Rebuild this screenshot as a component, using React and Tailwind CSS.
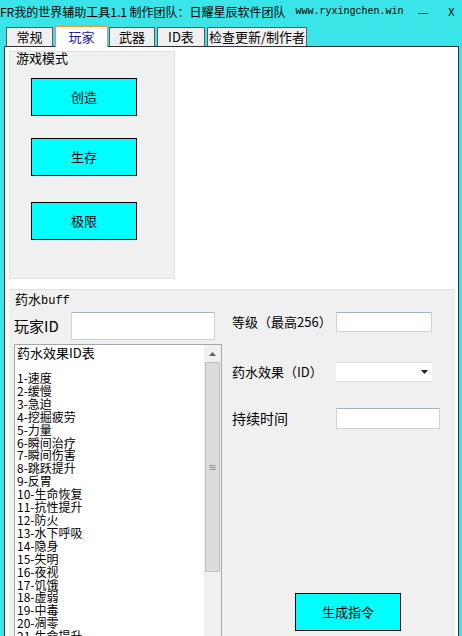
import React from 'react';

const cjk = { fontFamily: '"Noto Sans CJK SC", "DejaVu Sans", sans-serif' };

const effects = [
  '速度', '缓慢', '急迫', '挖掘疲劳', '力量', '瞬间治疗', '瞬间伤害', '跳跃提升', '反胃', '生命恢复',
  '抗性提升', '防火', '水下呼吸', '隐身', '失明', '夜视', '饥饿', '虚弱', '中毒', '凋零', '生命提升',
];

const Tab = ({ label, active, className }) => (
  <div
    className={
      active
        ? 'h-[22px] bg-white border-t-2 border-t-[#f0a030] border-x border-x-[#a0a0a0] flex items-center justify-center text-[13px] text-[#1a1aa0] relative top-[1px] ' + className
        : 'h-[19px] bg-[#f0f0f0] border border-[#5a5a5a] border-b-0 flex items-center justify-center text-[13px] text-black ' + className
    }
  >
    {label}
  </div>
);

const ModeButton = ({ children }) => (
  <button className="w-[106px] h-[38px] bg-[#00ffff] border border-black text-[13px] text-black">
    {children}
  </button>
);

const Field = ({ className }) => (
  <div className={'bg-white border border-[#c8d4de] border-t-[#9fb6c8] ' + className} />
);

export default function App() {
  return (
    <div className="w-[462px] h-[636px] overflow-hidden bg-[#3ae5e9] flex flex-col text-black" style={cjk}>
      {/* title bar */}
      <div className="h-[23px] shrink-0 flex items-center text-[12px] leading-none whitespace-nowrap">
        <span>FR我的世界辅助工具1.1 制作团队：日耀星辰软件团队</span>
        <span className="ml-[10px] text-[10px]" style={{ fontFamily: '"Liberation Mono", monospace' }}>www.ryxingchen.win</span>
        <span className="ml-[14px]">—</span>
        <span className="ml-[20px] text-[11px]">X</span>
      </div>

      {/* tabs */}
      <div className="h-[23px] shrink-0 flex items-end">
        <Tab label="常规" className="ml-[6px] w-[47px]" />
        <Tab label="玩家" active className="ml-[2px] w-[53px]" />
        <Tab label="武器" className="ml-[1px] w-[46px]" />
        <Tab label="ID表" className="ml-[2px] w-[48px]" />
        <Tab label="检查更新/制作者" className="ml-[2px] w-[100px]" />
      </div>

      {/* tab page */}
      <div className="ml-[4px] mr-[3px] flex-1 min-h-0 overflow-hidden bg-white border border-[#303030] border-b-0 flex flex-col">
        <div className="h-[242px] shrink-0 pl-[4px] pt-[4px]">
          <div className="w-[166px] h-[228px] bg-[#f0f0f0] border border-[#e2e2e2] flex flex-col">
            <div className="pl-[6px] text-[13px] leading-[13px] -mt-[1px]">游戏模式</div>
            <div className="pl-[21px] pt-[14px] flex flex-col gap-[22px]">
              <ModeButton>创造</ModeButton>
              <ModeButton>生存</ModeButton>
              <div className="mt-[4px]"><ModeButton>极限</ModeButton></div>
            </div>
          </div>
        </div>

        {/* potion group */}
        <div className="ml-[4px] mr-[3px] flex-1 min-h-0 overflow-hidden bg-[#f0f0f0] border-t border-[#e0e0e0] flex flex-col">
          <div className="pl-[6px] pt-[2px] text-[13px] leading-[13px]">
            药水<span style={{ fontFamily: '"Liberation Mono", monospace' }} className="text-[12px]">buff</span>
          </div>
          <div className="flex">
            {/* left column */}
            <div className="pl-[5px] flex flex-col">
              <div className="mt-[4px] flex items-center h-[28px]">
                <span className="text-[15px] w-[57px]">玩家ID</span>
                <Field className="w-[144px] h-[28px]" />
              </div>
              <div className="mt-[4px] w-[208px] h-[300px] bg-white border border-[#a8a8a8] flex">
                <div className="flex-1 pl-[2px] pt-[1px] text-[12px] leading-[12.9px] whitespace-nowrap overflow-hidden">
                  <div className="text-[13px] leading-[14px]">药水效果ID表</div>
                  <div className="h-[12px]" />
                  {effects.map((e, i) => (
                    <div key={i}>{i + 1}-{e}</div>
                  ))}
                </div>
                <div className="w-[17px] bg-[#f0f0f0] flex flex-col items-center">
                  <div className="h-[17px] flex items-center justify-center">
                    <svg width="7" height="4" viewBox="0 0 7 4"><path d="M0 4L3.5 0L7 4Z" fill="#606060" /></svg>
                  </div>
                  <div className="w-[15px] h-[210px] bg-[#dcdcdc] border border-[#c0c0c0] flex items-center justify-center">
                    <span className="text-[9px] text-[#555] leading-none">≡</span>
                  </div>
                </div>
              </div>
            </div>

            {/* right column */}
            <div className="ml-[10px] flex flex-col text-[13px]">
              <div className="mt-[4px] flex items-center h-[20px]">
                <span className="w-[104px]">等级（最高256）</span>
                <Field className="w-[96px] h-[20px]" />
              </div>
              <div className="mt-[30px] flex items-center h-[20px]">
                <span className="w-[104px]">药水效果（ID）</span>
                <div className="w-[96px] h-[20px] bg-white border-y border-[#dcdcdc] flex items-center justify-end pr-[4px]">
                  <svg width="7" height="4" viewBox="0 0 7 4"><path d="M0 0L7 0L3.5 4Z" fill="#202020" /></svg>
                </div>
              </div>
              <div className="mt-[26px] flex items-center h-[21px]">
                <span className="w-[104px] text-[14px]">持续时间</span>
                <Field className="w-[104px] h-[21px]" />
              </div>
              <div className="mt-[164px] ml-[63px]">
                <button className="w-[106px] h-[38px] bg-[#00ffff] border border-black text-[13px]">生成指令</button>
              </div>
            </div>
          </div>
        </div>
      </div>
    </div>
  );
}
